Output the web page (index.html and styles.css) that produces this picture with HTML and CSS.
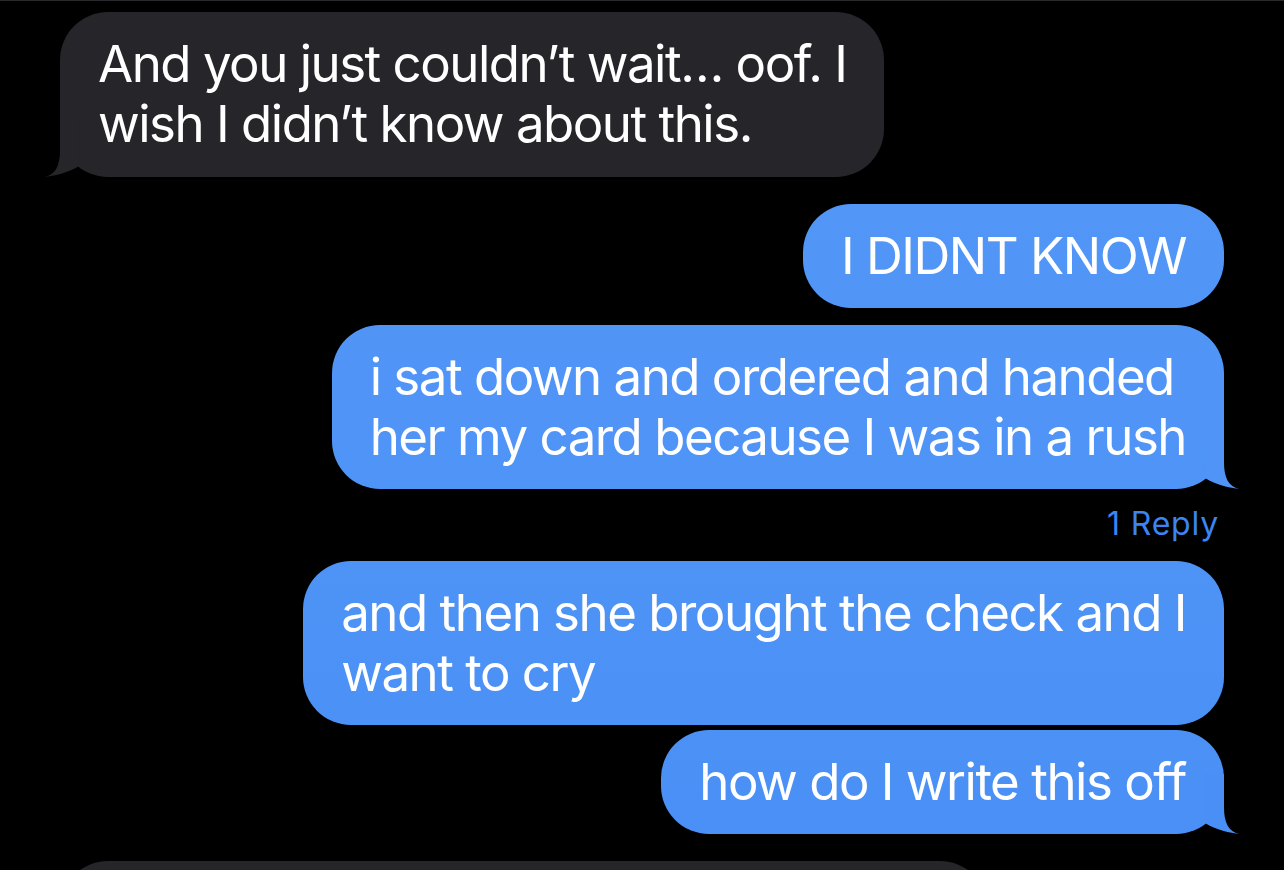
FILE: index.html
```html
<!DOCTYPE html>
<html lang="en">
<head>
    <title>Messages</title>
    <link rel="stylesheet" href="styles.css">
</head>
<body>
    <div class="screen">
        <div class="thread">
            <!-- incoming -->
            <div class="bubble received first">
                And you just couldn’t wait… oof. I<br>wish I didn’t know about this.
                <svg class="tail tail-gray" viewBox="-24 -60 41 60" width="41" height="60">
                    <path d="M -20 -60 L 0 -60 L 0 -27 C 0 -12 4 -2 16 0 C 6 -1 -8 -4 -19 -11 Z"/>
                </svg>
            </div>

            <!-- outgoing -->
            <div class="bubble sent gap-big">I DIDNT KNOW</div>
            <div class="bubble sent gap-mid">
                i sat down and ordered and handed<br>her my card because I was in a rush
                <svg class="tail tail-blue-mid" viewBox="-24 -60 41 60" width="41" height="60">
                    <path d="M -20 -60 L 0 -60 L 0 -27 C 0 -12 4 -2 16 0 C 6 -1 -8 -4 -19 -11 Z"/>
                </svg>
            </div>
            <div class="reply">1 Reply</div>
            <div class="bubble sent gap-reply">and then she brought the check and I<br>want to cry</div>
            <div class="bubble sent gap-small">
                how do I write this off
                <svg class="tail tail-blue-low" viewBox="-24 -60 41 60" width="41" height="60">
                    <path d="M -20 -60 L 0 -60 L 0 -27 C 0 -12 4 -2 16 0 C 6 -1 -8 -4 -19 -11 Z"/>
                </svg>
            </div>

            <!-- next incoming, cut off by the bottom edge -->
            <div class="bubble received gap-big next"></div>
        </div>
    </div>
</body>
</html>
```

FILE: styles.css
```css
/* Messages thread, dark mode */

body {
    margin: 0;
    padding: 0;
    background-color: #000;
    font-family: Inter, "Noto Sans", sans-serif;
    overflow: hidden;
    height: 870px;
}

.screen {
    border-top: 1px solid #2a2a2c;
    padding: 11px 60px 0;
}

.thread {
    display: flex;
    flex-direction: column;
}

.bubble {
    position: relative;
    width: fit-content;
    white-space: nowrap;
    padding: 22px 38px;
    border-radius: 48px;
    font-size: 51px;
    line-height: 60px;
    letter-spacing: -1.5px;
    color: #fff;
}

.received {
    align-self: flex-start;
    background-color: #262529;
}

.received.first {
    padding-bottom: 23px;
}

.sent {
    align-self: flex-end;
    background: linear-gradient(to bottom, #5499f7 0px, #4a8ff5 870px) fixed;
}

.gap-big {
    margin-top: 27px;
}

.gap-mid {
    margin-top: 17px;
}

.gap-reply {
    margin-top: 19px;
}

.gap-small {
    margin-top: 5px;
}

.next {
    width: 928px;
    height: 60px;
    padding: 22px 0;
}

.reply {
    align-self: flex-end;
    margin-top: 16px;
    padding-right: 5px;
    font-size: 32px;
    line-height: 37px;
    letter-spacing: 0.8px;
    color: #3b84f2;
}

.tail {
    position: absolute;
    bottom: 0;
    right: -17px;
}

.tail-gray {
    left: -17px;
    right: auto;
    transform: scaleX(-1);
    fill: #262529;
}

.tail-blue-mid {
    fill: #4f94f6;
}

.tail-blue-low {
    fill: #4a8ff5;
}
```
